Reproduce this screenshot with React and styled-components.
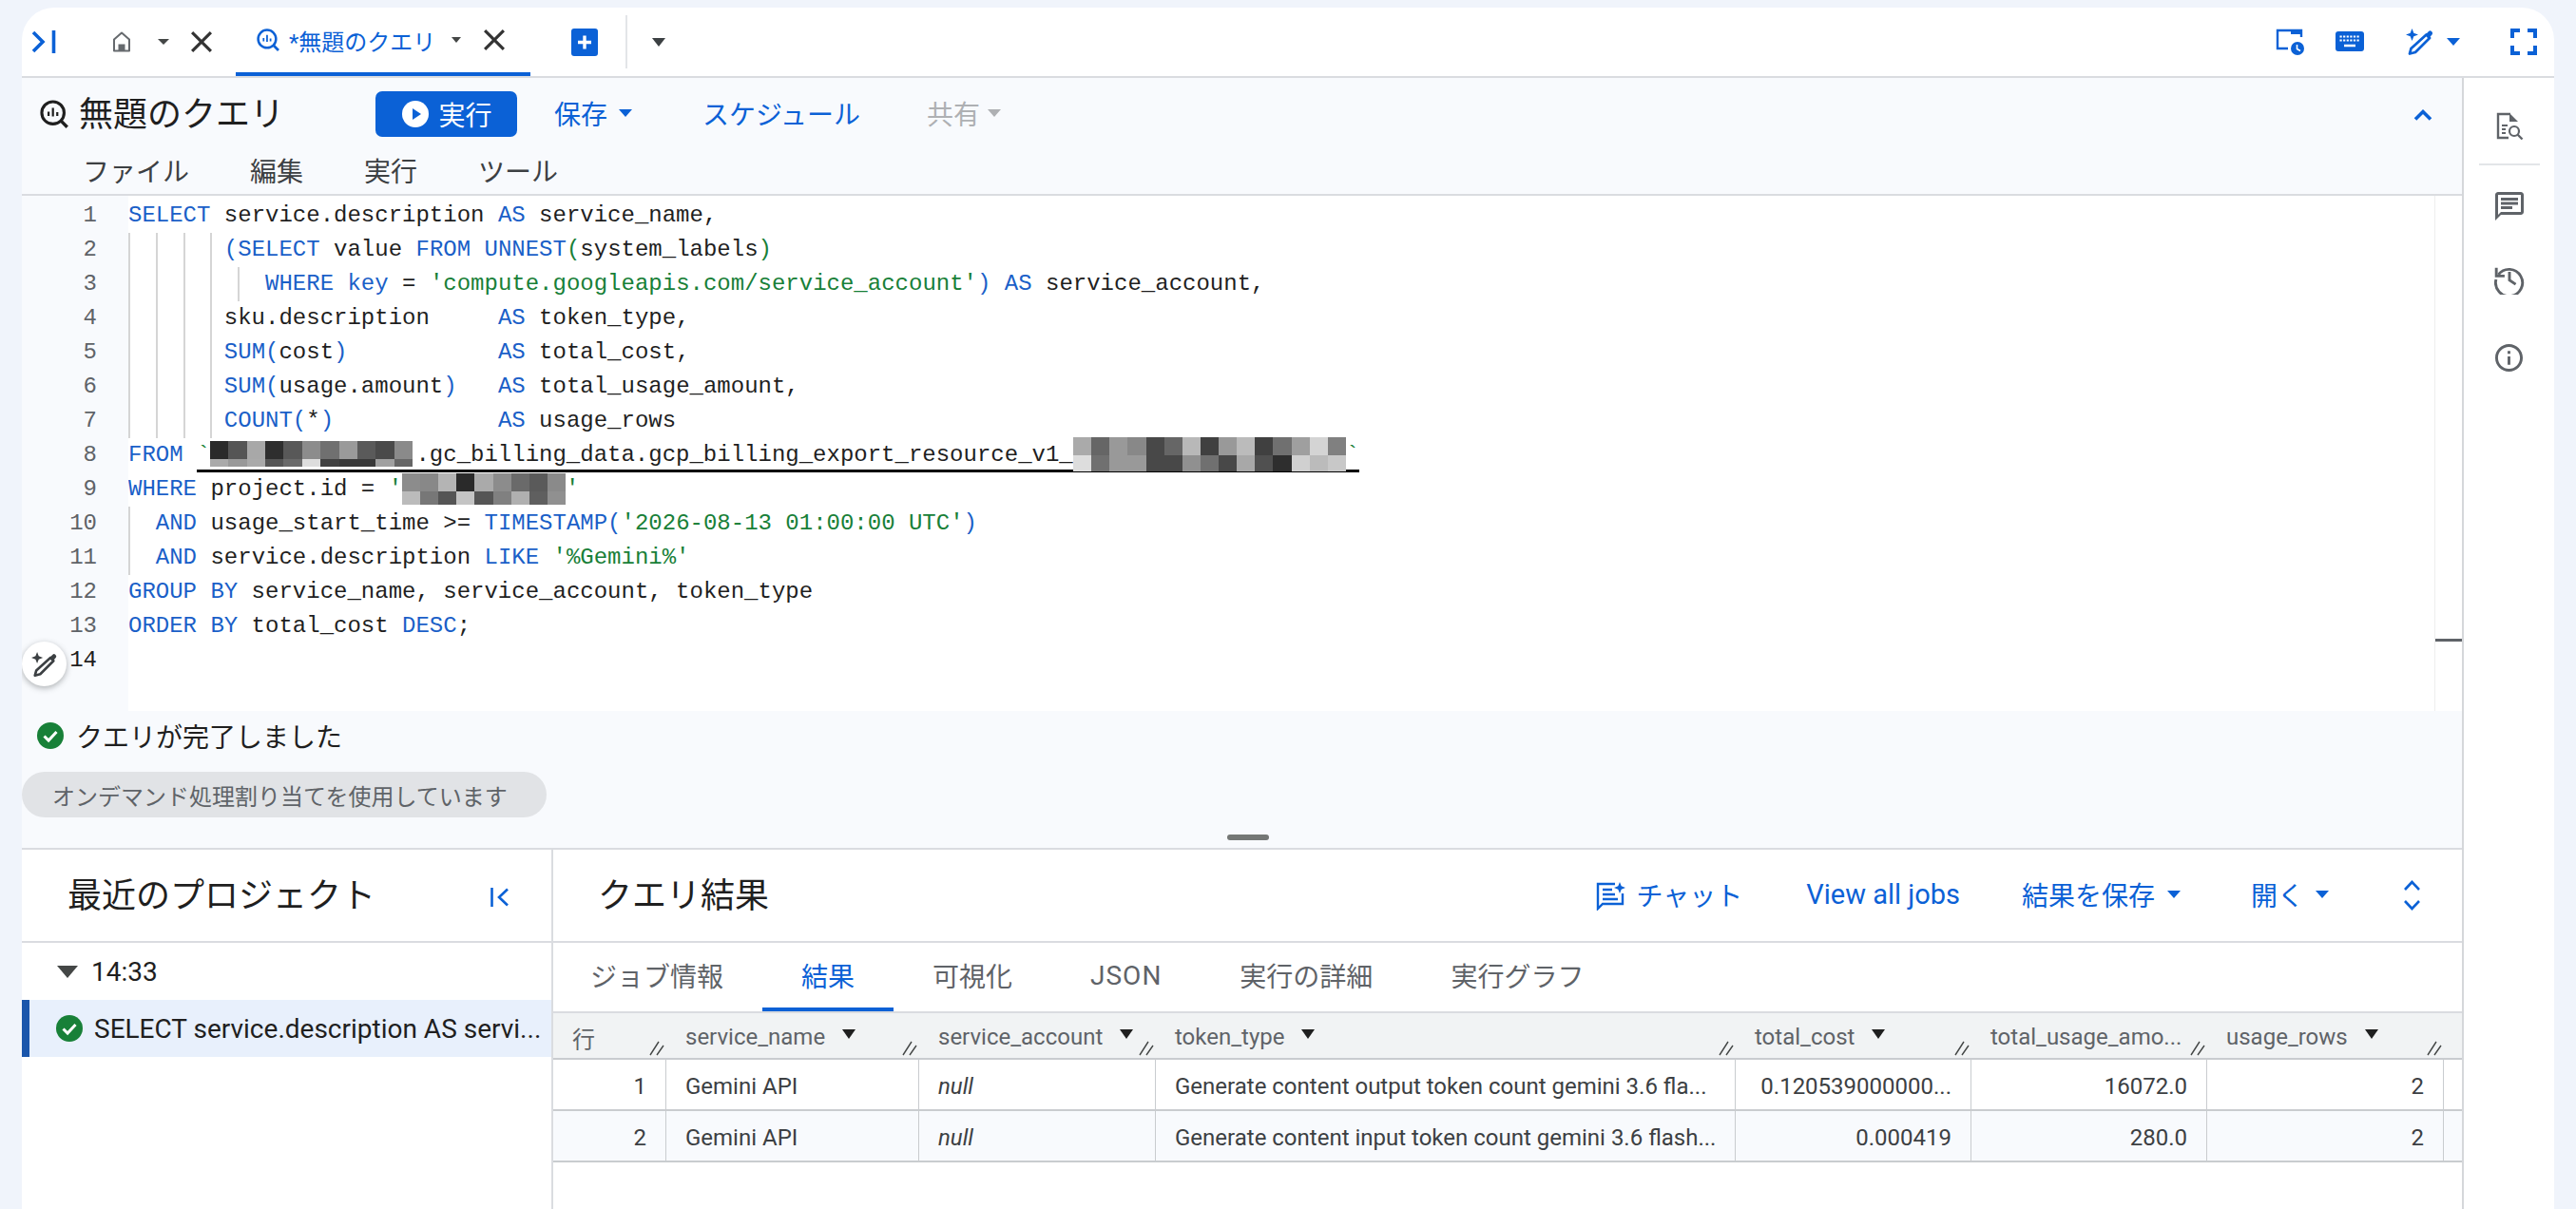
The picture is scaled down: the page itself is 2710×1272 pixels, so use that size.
import React from 'react'
import styled, { createGlobalStyle } from 'styled-components'

const BLUE = '#0b61d6'
const INK = '#1f1f1f'
const GREY = '#5f6368'
const LINE = '#dadce0'
const SOFT = '#f8fafd'

const GlobalStyle = createGlobalStyle`
  html, body {
    margin: 0;
    background: #f0f4fb;
    font-family: Roboto, "Noto Sans CJK JP", sans-serif;
    color: ${INK};
  }
`

const Page = styled.div`
  height: 1272px;
  box-sizing: border-box;
  padding: 8px 23px 0;
  overflow: hidden;
`

const Card = styled.div`
  height: 1264px;
  display: flex;
  flex-direction: column;
  background: #fff;
  border-radius: 34px 34px 0 0;
  overflow: hidden;
`

const TabBar = styled.div`
  height: 72px;
  flex: none;
  display: flex;
  align-items: center;
  border-bottom: 2px solid ${LINE};
  padding-right: 18px;
`

const Icon = styled.svg`
  display: block;
  flex: none;
  margin-left: ${p => p.$ml || 0}px;
  margin-top: ${p => p.$mt || 0}px;
  color: ${p => p.$color || 'currentColor'};
`

const Caret = styled.span`
  flex: none;
  display: inline-block;
  margin-left: ${p => p.$ml || 0}px;
  margin-bottom: ${p => p.$mb || 0}px;
  border-left: ${p => p.$w / 2}px solid transparent;
  border-right: ${p => p.$w / 2}px solid transparent;
  border-top: ${p => p.$h}px solid ${p => p.$color || '#444746'};
`

const QueryTab = styled.div`
  width: 310px;
  height: 72px;
  margin-left: 25px;
  box-sizing: border-box;
  padding-left: 22px;
  display: flex;
  align-items: center;
  border-bottom: 4px solid ${BLUE};
  color: ${BLUE};
`

const QueryTabLabel = styled.span`
  margin-left: 10px;
  font-size: 24px;
  white-space: nowrap;
`

const TabDivider = styled.span`
  width: 2px;
  height: 56px;
  margin-left: 29px;
  background: #e3e5e8;
`

const Spacer = styled.span`
  flex: 1;
`

const Workspace = styled.div`
  flex: 1;
  min-height: 0;
  display: flex;
`

const Main = styled.div`
  width: 2567px;
  flex: none;
  display: flex;
  flex-direction: column;
`

const Toolbar = styled.div`
  height: 122px;
  flex: none;
  background: ${SOFT};
  border-bottom: 2px solid ${LINE};
`

const TitleRow = styled.div`
  height: 76px;
  display: flex;
  align-items: center;
  padding: 0 31px 0 19px;
`

const QueryTitle = styled.h1`
  margin: 0 0 6px 11px;
  width: 312px;
  font-size: 36px;
  font-weight: 400;
  white-space: nowrap;
`

const RunButton = styled.button`
  width: 149px;
  height: 48px;
  border: 0;
  border-radius: 7px;
  background: ${BLUE};
  color: #fff;
  font: inherit;
  font-size: 28px;
  font-weight: 400;
  display: flex;
  align-items: center;
  justify-content: center;
  gap: 10px;
  padding: 0 0 0 2px;
`

const ToolAction = styled.span`
  display: flex;
  align-items: center;
  margin-left: ${p => p.$ml}px;
  padding-bottom: 3px;
  font-size: ${p => p.$size || 28}px;
  font-weight: 400;
  color: ${p => (p.$muted ? '#aeb0b3' : BLUE)};
  white-space: nowrap;
`

const MenuRow = styled.div`
  display: flex;
  gap: 64px;
  padding-left: 64px;
  height: 42px;
  align-items: center;
`

const MenuItem = styled.span`
  font-size: 28px;
  color: #3c4043;
`

const Editor = styled.div`
  height: 542px;
  flex: none;
  position: relative;
  display: flex;
  background: #fff;
`

const Gutter = styled.div`
  width: 112px;
  flex: none;
  box-sizing: border-box;
  padding: 3px 33px 0 0;
  background: ${SOFT};
  text-align: right;
  font: 24px/36px "Liberation Mono", monospace;
  color: ${GREY};
`

const LineNo = styled.div`
  height: 36px;
  color: ${p => (p.$active ? INK : GREY)};
`

const CodeArea = styled.div`
  flex: 1;
  padding-top: 3px;
  font: 24px/36px "Liberation Mono", monospace;
  color: ${INK};
  white-space: pre;
  overflow: hidden;
`

const CodeLine = styled.div`
  height: 36px;
  position: relative;
`

const Guide = styled.span`
  position: absolute;
  top: 0;
  bottom: 0;
  left: ${p => p.$col * 14.4}px;
  width: 2px;
  background: #d5d5d5;
`

const Kw = styled.span`
  color: #1a5fc8;
`

const Str = styled.span`
  color: #188038;
`

const Squiggle = styled.span`
  display: inline-block;
  height: 36px;
  box-sizing: border-box;
  vertical-align: top;
  border-bottom: 3px solid #000;
`

const AfterMosaic = styled.span`
  margin-left: 3px;
`

const MosaicBox = styled.svg`
  display: inline-block;
  vertical-align: top;
  margin-top: ${p => p.$top}px;
`

const Ruler = styled.div`
  width: 28px;
  flex: none;
  position: relative;
  border-left: 1px solid #eeeeee;
`

const RulerMark = styled.span`
  position: absolute;
  left: 0;
  right: 0;
  top: 466px;
  height: 3px;
  background: #5f6368;
`

const AssistBubble = styled.div`
  position: absolute;
  left: 0;
  top: 469px;
  width: 47px;
  height: 47px;
  border-radius: 50%;
  background: #fff;
  box-shadow: 0 2px 6px rgba(60, 64, 67, 0.4);
  display: flex;
  align-items: center;
  justify-content: center;
`

const StatusPanel = styled.div`
  height: 144px;
  flex: none;
  position: relative;
  background: ${SOFT};
`

const StatusRow = styled.div`
  height: 54px;
  box-sizing: border-box;
  padding: 0 0 2px 16px;
  display: flex;
  align-items: center;
  gap: 13px;
  font-size: 28px;
`

const Chip = styled.div`
  width: 552px;
  height: 48px;
  margin-top: 10px;
  box-sizing: border-box;
  padding-left: 32px;
  display: flex;
  align-items: center;
  border-radius: 24px;
  background: #e1e3e6;
  color: ${GREY};
  font-size: 24px;
  white-space: nowrap;
`

const DragHandle = styled.span`
  position: absolute;
  left: 1268px;
  bottom: 8px;
  width: 44px;
  height: 6px;
  border-radius: 3px;
  background: #747775;
`

const Results = styled.div`
  flex: 1;
  min-height: 0;
  display: flex;
  border-top: 2px solid ${LINE};
`

const HistoryPanel = styled.div`
  width: 557px;
  flex: none;
  border-right: 2px solid ${LINE};
`

const PanelHeader = styled.div`
  height: 96px;
  display: flex;
  align-items: center;
  border-bottom: 2px solid ${LINE};
  padding-left: ${p => p.$pad}px;
  padding-right: ${p => p.$padRight || 0}px;
`

const PanelTitle = styled.h2`
  margin: 0 0 6px;
  font-size: 36px;
  font-weight: 400;
  white-space: nowrap;
`

const TimeRow = styled.div`
  height: 60px;
  display: flex;
  align-items: center;
  padding-left: 37px;
  gap: 14px;
  font-size: 28px;
`

const JobRow = styled.div`
  height: 60px;
  box-sizing: border-box;
  display: flex;
  align-items: center;
  gap: 12px;
  padding-left: 28px;
  border-left: 8px solid #1a56ab;
  background: #e8f0fc;
  font-size: 28px;
  white-space: nowrap;
`

const ResultPanel = styled.div`
  flex: 1;
  min-width: 0;
`

const PanelActions = styled.div`
  margin-left: auto;
  display: flex;
  align-items: center;
`

const TabStrip = styled.div`
  height: 72px;
  display: flex;
  border-bottom: 2px solid ${LINE};
`

const ResultTab = styled.div`
  height: 72px;
  box-sizing: border-box;
  padding: 0 41px 0 ${p => (p.$first ? 39 : 41)}px;
  display: flex;
  align-items: center;
  font-size: 28px;
  letter-spacing: ${p => p.$spacing || 0}px;
  white-space: nowrap;
  color: ${p => (p.$active ? BLUE : GREY)};
  border-bottom: 4px solid ${p => (p.$active ? BLUE : 'transparent')};
`

const GridRow = styled.div`
  display: grid;
  grid-template-columns: 119px 266px 249px 610px 248px 248px 249px 1fr;
  height: ${p => p.$h}px;
  box-sizing: border-box;
  border-bottom: 2px solid #c9cccf;
  background: ${p => p.$bg || '#fff'};
`

const HeadCell = styled.div`
  position: relative;
  display: flex;
  align-items: center;
  gap: 18px;
  padding: 3px 0 0 20px;
  font-size: 24px;
  color: ${GREY};
  white-space: nowrap;
`

const Grip = styled.svg`
  position: absolute;
  right: 1px;
  bottom: 2px;
`

const DataCell = styled.div`
  display: flex;
  align-items: center;
  justify-content: ${p => (p.$right ? 'flex-end' : 'flex-start')};
  padding: 3px 20px 0;
  font-size: 24px;
  color: #3c4043;
  font-style: ${p => (p.$italic ? 'italic' : 'normal')};
  white-space: nowrap;
  overflow: hidden;
  border-right: 1px solid #c9cccf;
`

const Sidebar = styled.div`
  flex: 1;
  display: flex;
  flex-direction: column;
  align-items: center;
  border-left: 2px solid #d5d7da;
  color: ${GREY};
  padding-top: 36px;
`

const SideDivider = styled.span`
  width: 64px;
  height: 2px;
  margin: 24px 0 28px;
  background: #e3e5e8;
`

const QueryIcon = ({ size, color, ml }) => (
  <Icon width={size} height={size} viewBox="0 0 23 23" $color={color} $ml={ml}>
    <circle cx="10.5" cy="10.5" r="9" fill="none" stroke="currentColor" strokeWidth="2.4" />
    <path d="M16.8 16.8l5.2 5.2" stroke="currentColor" strokeWidth="2.6" fill="none" />
    <path d="M7 9.5v3.5M10.5 6.5v7M14 10v3" stroke="currentColor" strokeWidth="1.7" fill="none" />
  </Icon>
)

const CloseIcon = ({ ml }) => (
  <Icon width="22" height="22" viewBox="5 5 14 14" $ml={ml} $color="#333">
    <path fill="currentColor" d="M19 6.41L17.59 5 12 10.59 6.41 5 5 6.41 10.59 12 5 17.59 6.41 19 12 13.41 17.59 19 19 17.59 13.41 12z" />
  </Icon>
)

const PenSpark = ({ size, color, ml }) => (
  <Icon width={size} height={size} viewBox="0 0 30 28" $color={color} $ml={ml}>
    <path fill="currentColor" d="M6.5 0l1.8 4.7L13 6.5 8.3 8.3 6.5 13 4.7 8.3 0 6.5l4.7-1.8z" />
    <path fill="none" stroke="currentColor" strokeWidth="2.8" strokeLinejoin="round" d="M21.5 6.5l3.5 3.5L10 25l-6 1.5L5.5 21z" />
    <path fill="currentColor" d="M20.5 6.5L24 3a2.2 2.2 0 0 1 3 0l.5.5a2.2 2.2 0 0 1 0 3L24 10.5z" />
  </Icon>
)

const CheckCircle = () => (
  <Icon width="28" height="28" viewBox="0 0 28 28">
    <circle cx="14" cy="14" r="14" fill="#188038" />
    <path d="M7.5 14.5l4.6 4.6 8.4-9" fill="none" stroke="#fff" strokeWidth="3" />
  </Icon>
)

const Mosaic = ({ top, width, rowOne, rowTwo, rows }) => {
  const cellW = width / rows[0].length
  return (
    <MosaicBox width={width} height={rowOne + rowTwo} $top={top} shapeRendering="crispEdges">
      {rows.map((row, r) =>
        row.map((c, i) => (
          <rect
            key={`${r}-${i}`}
            x={i * cellW}
            y={r === 0 ? 0 : rowOne}
            width={cellW + 0.5}
            height={r === 0 ? rowOne : rowTwo}
            fill={c}
          />
        ))
      )}
    </MosaicBox>
  )
}

const mosaicA = [
  ['#2a2a2a', '#555', '#a8a8a8', '#2e2e2e', '#585858', '#8c8c8c', '#707070', '#9a9a9a', '#5a5a5a', '#4a4a4a', '#8a8a8a'],
  ['#aaa', '#999', '#aaa', '#555', '#6a6a6a', '#ddd', '#404040', '#383838', '#383838', '#a0a0a0', '#666'],
]
const mosaicB = [
  ['#aaa', '#666', '#999', '#888', '#484848', '#666', '#b8b8b8', '#404040', '#999', '#bbb', '#404040', '#707070', '#9f9f9f', '#d4d4d4', '#808080'],
  ['#ddd', '#707070', '#999', '#999', '#484848', '#484848', '#909090', '#707070', '#484848', '#a8a8a8', '#505050', '#2e2e2e', '#d0d0d0', '#bbb', '#c8c8c8'],
]
const mosaicC = [
  ['#8c8c8c', '#888', '#b4b4b4', '#2a2a2a', '#aaa', '#8c8c8c', '#6a6a6a', '#5a5a5a', '#8a8a8a'],
  ['#bbb', '#777', '#555', '#c4c4c4', '#555', '#808080', '#b0b0b0', '#5f5f5f', '#909090'],
]

const guidesBlock = [0, 2, 4, 6]

const codeLines = [
  { guides: [], body: <><Kw>SELECT</Kw> service.description <Kw>AS</Kw> service_name,</> },
  { guides: guidesBlock, body: <>       <Kw>(SELECT</Kw> value <Kw>FROM</Kw> <Kw>UNNEST</Kw><Str>(</Str>system_labels<Str>)</Str></> },
  { guides: [...guidesBlock, 8], body: <>          <Kw>WHERE</Kw> <Kw>key</Kw> = <Str>'compute.googleapis.com/service_account'</Str><Kw>)</Kw> <Kw>AS</Kw> service_account,</> },
  { guides: guidesBlock, body: <>       sku.description     <Kw>AS</Kw> token_type,</> },
  { guides: guidesBlock, body: <>       <Kw>SUM(</Kw>cost<Kw>)</Kw>           <Kw>AS</Kw> total_cost,</> },
  { guides: guidesBlock, body: <>       <Kw>SUM(</Kw>usage.amount<Kw>)</Kw>   <Kw>AS</Kw> total_usage_amount,</> },
  { guides: guidesBlock, body: <>       <Kw>COUNT(</Kw>*<Kw>)</Kw>            <Kw>AS</Kw> usage_rows</> },
  {
    guides: [],
    body: (
      <>
        <Kw>FROM</Kw>{' '}
        <Squiggle>
          <Str>`</Str>
          <Mosaic width={213} rowOne={19} rowTwo={8} top={3} rows={mosaicA} />
          <AfterMosaic>.gc_billing_data.gcp_billing_export_resource_v1_</AfterMosaic>
          <Mosaic width={287} rowOne={19} rowTwo={17} top={-1} rows={mosaicB} />
          <Str>`</Str>
        </Squiggle>
      </>
    ),
  },
  {
    guides: [],
    body: (
      <>
        <Kw>WHERE</Kw> project.id = <Str>'</Str>
        <Mosaic width={172} rowOne={19} rowTwo={14} top={1} rows={mosaicC} />
        <Str>'</Str>
      </>
    ),
  },
  { guides: [0], body: <>  <Kw>AND</Kw> usage_start_time &gt;= <Kw>TIMESTAMP</Kw><Kw>(</Kw><Str>'2026-08-13 01:00:00 UTC'</Str><Kw>)</Kw></> },
  { guides: [0], body: <>  <Kw>AND</Kw> service.description <Kw>LIKE</Kw> <Str>'%Gemini%'</Str></> },
  { guides: [], body: <><Kw>GROUP BY</Kw> service_name, service_account, token_type</> },
  { guides: [], body: <><Kw>ORDER BY</Kw> total_cost <Kw>DESC</Kw>;</> },
  { guides: [], body: '' },
]

const tableHead = [
  { label: '行' },
  { label: 'service_name', sort: true },
  { label: 'service_account', sort: true },
  { label: 'token_type', sort: true },
  { label: 'total_cost', sort: true },
  { label: 'total_usage_amo...' },
  { label: 'usage_rows', sort: true },
]

const tableRows = [
  ['1', 'Gemini API', 'null', 'Generate content output token count gemini 3.6 fla...', '0.120539000000...', '16072.0', '2'],
  ['2', 'Gemini API', 'null', 'Generate content input token count gemini 3.6 flash...', '0.000419', '280.0', '2'],
]

export default function App() {
  return (
    <Page>
      <GlobalStyle />
      <Card>
        <TabBar>
          <Icon width="26" height="26" viewBox="0 0 26 26" $ml={10} $color={BLUE}>
            <path d="M2 3l10 10L2 23" fill="none" stroke="currentColor" strokeWidth="3.6" />
            <path d="M23.5 1v24" stroke="currentColor" strokeWidth="3.6" />
          </Icon>
          <Icon width="20" height="22" viewBox="0 0 20 22" $ml={59} $color="#666a6e">
            <path d="M2 20.5V8.5L10 1.5l8 7v12z" fill="none" stroke="currentColor" strokeWidth="2" strokeLinejoin="round" />
            <path d="M6.5 13.5h7V20h-7z" fill="currentColor" />
          </Icon>
          <Caret $w={12} $h={6} $ml={28} />
          <CloseIcon ml={23} />
          <QueryTab>
            <QueryIcon size={24} />
            <QueryTabLabel>*無題のクエリ</QueryTabLabel>
            <Caret $w={11} $h={6} $ml={17} $color="#444746" />
            <CloseIcon ml={24} />
          </QueryTab>
          <Icon width="28" height="29" viewBox="0 0 28 29" $ml={43}>
            <rect width="28" height="29" rx="3" fill={BLUE} />
            <path d="M14 7.5v14M7 14.5h14" stroke="#fff" strokeWidth="3.4" />
          </Icon>
          <TabDivider />
          <Caret $w={15} $h={9} $ml={26} $color="#3c4043" />
          <Spacer />
          <Icon width="30" height="28" viewBox="0 0 30 28" $color={BLUE}>
            <path d="M13 21H2V2h25v7" fill="none" stroke="currentColor" strokeWidth="2.4" />
            <path d="M16 2h11v4H16z" fill="currentColor" />
            <circle cx="23" cy="21" r="7" fill="currentColor" />
            <path d="M22.5 17v4.5l3.5 2" fill="none" stroke="#fff" strokeWidth="1.6" />
          </Icon>
          <Icon width="30" height="22" viewBox="0 0 30 22" $ml={33} $color={BLUE}>
            <rect width="30" height="21" rx="3" fill="currentColor" />
            <path d="M4.5 5.5h21M4.5 9.5h21" stroke="#fff" strokeWidth="2.2" strokeDasharray="2.2 1.4" fill="none" />
            <path d="M9 15h12" stroke="#fff" strokeWidth="2.4" />
          </Icon>
          <PenSpark size={30} color={BLUE} ml={44} />
          <Caret $w={15} $h={8} $ml={13} $color={BLUE} />
          <Icon width="28" height="28" viewBox="5 5 14 14" $ml={53} $color={BLUE}>
            <path fill="currentColor" d="M7 14H5v5h5v-2H7v-3zm-2-4h2V7h3V5H5v5zm12 7h-3v2h5v-5h-2v3zM14 5v2h3v3h2V5h-5z" />
          </Icon>
        </TabBar>

        <Workspace>
          <Main>
            <Toolbar>
              <TitleRow>
                <QueryIcon size={30} color={INK} />
                <QueryTitle>無題のクエリ</QueryTitle>
                <RunButton>
                  <Icon width="28" height="28" viewBox="0 0 28 28">
                    <circle cx="14" cy="14" r="14" fill="#fff" />
                    <path d="M11 8l9 6-9 6z" fill={BLUE} />
                  </Icon>
                  実行
                </RunButton>
                <ToolAction $ml={39}>
                  保存
                  <Caret $w={14} $h={8} $ml={12} $color={BLUE} />
                </ToolAction>
                <ToolAction $ml={74}>スケジュール</ToolAction>
                <ToolAction $ml={70} $muted>
                  共有
                  <Caret $w={14} $h={8} $ml={8} $color="#aeb0b3" />
                </ToolAction>
                <Spacer />
                <Icon width="20" height="13" viewBox="0 0 20 13" $color={BLUE}>
                  <path d="M2 11.5l8-8 8 8" fill="none" stroke="currentColor" strokeWidth="3.6" />
                </Icon>
              </TitleRow>
              <MenuRow>
                <MenuItem>ファイル</MenuItem>
                <MenuItem>編集</MenuItem>
                <MenuItem>実行</MenuItem>
                <MenuItem>ツール</MenuItem>
              </MenuRow>
            </Toolbar>

            <Editor>
              <Gutter>
                {codeLines.map((_, i) => (
                  <LineNo key={i} $active={i === 13}>{i + 1}</LineNo>
                ))}
              </Gutter>
              <CodeArea>
                {codeLines.map((line, i) => (
                  <CodeLine key={i}>
                    {line.guides.map(g => <Guide key={g} $col={g} />)}
                    {line.body}
                  </CodeLine>
                ))}
              </CodeArea>
              <Ruler>
                <RulerMark />
              </Ruler>
              <AssistBubble>
                <PenSpark size={28} color="#3c4043" />
              </AssistBubble>
            </Editor>

            <StatusPanel>
              <StatusRow>
                <CheckCircle />
                クエリが完了しました
              </StatusRow>
              <Chip>オンデマンド処理割り当てを使用しています</Chip>
              <DragHandle />
            </StatusPanel>

            <Results>
              <HistoryPanel>
                <PanelHeader $pad={48}>
                  <PanelTitle>最近のプロジェクト</PanelTitle>
                  <Icon width="20" height="20" viewBox="0 0 20 20" $ml={121} $mt={4} $color={BLUE}>
                    <path d="M1.5 0v20" stroke="currentColor" strokeWidth="2.6" />
                    <path d="M18 1.5L9 10l9 8.5" fill="none" stroke="currentColor" strokeWidth="2.6" />
                  </Icon>
                </PanelHeader>
                <TimeRow>
                  <Caret $w={22} $h={13} $color="#444746" />
                  14:33
                </TimeRow>
                <JobRow>
                  <CheckCircle />
                  SELECT service.description AS servi...
                </JobRow>
              </HistoryPanel>

              <ResultPanel>
                <PanelHeader $pad={47} $padRight={43}>
                  <PanelTitle>クエリ結果</PanelTitle>
                  <PanelActions>
                    <Icon width="31" height="31" viewBox="0 0 31 31" $color={BLUE}>
                      <path d="M20 3H2v26l5-5h21V13" fill="none" stroke="currentColor" strokeWidth="2.4" />
                      <path d="M7 9h10M7 14h13M7 19h16" stroke="currentColor" strokeWidth="2.4" />
                      <path fill="currentColor" d="M25 1l1.7 4.3L31 7l-4.3 1.7L25 13l-1.7-4.3L19 7l4.3-1.7z" />
                    </Icon>
                    <ToolAction $ml={12}>チャット</ToolAction>
                    <ToolAction $ml={67} $size={29}>View all jobs</ToolAction>
                    <ToolAction $ml={65}>
                      結果を保存
                      <Caret $w={15} $h={8} $ml={13} $color={BLUE} />
                    </ToolAction>
                    <ToolAction $ml={74}>
                      開く
                      <Caret $w={15} $h={8} $ml={12} $color={BLUE} />
                    </ToolAction>
                    <Icon width="19" height="32" viewBox="0 0 19 32" $ml={78} $color={BLUE}>
                      <path d="M2 10l7.5-8L17 10M2 22l7.5 8 7.5-8" fill="none" stroke="currentColor" strokeWidth="2.6" />
                    </Icon>
                  </PanelActions>
                </PanelHeader>
                <TabStrip>
                  <ResultTab $first>ジョブ情報</ResultTab>
                  <ResultTab $active>結果</ResultTab>
                  <ResultTab>可視化</ResultTab>
                  <ResultTab $spacing={1}>JSON</ResultTab>
                  <ResultTab>実行の詳細</ResultTab>
                  <ResultTab>実行グラフ</ResultTab>
                </TabStrip>
                <GridRow $h={49} $bg="#f1f3f4">
                  {tableHead.map(col => (
                    <HeadCell key={col.label}>
                      {col.label}
                      {col.sort && <Caret $w={14} $h={10} $mb={6} $color="#1f1f1f" />}
                      <Grip width="17" height="16" viewBox="0 0 17 16">
                        <path d="M1 15L10 1M8 15L15 5" stroke="#444746" strokeWidth="1.4" fill="none" />
                      </Grip>
                    </HeadCell>
                  ))}
                  <HeadCell />
                </GridRow>
                {tableRows.map((row, r) => (
                  <GridRow key={row[0]} $h={54} $bg={r === 1 ? SOFT : '#fff'}>
                    <DataCell $right>{row[0]}</DataCell>
                    <DataCell>{row[1]}</DataCell>
                    <DataCell $italic>{row[2]}</DataCell>
                    <DataCell>{row[3]}</DataCell>
                    <DataCell $right>{row[4]}</DataCell>
                    <DataCell $right>{row[5]}</DataCell>
                    <DataCell $right>{row[6]}</DataCell>
                    <span />
                  </GridRow>
                ))}
              </ResultPanel>
            </Results>
          </Main>

          <Sidebar>
            <Icon width="30" height="30" viewBox="0 0 30 30">
              <path d="M16 2H3v25h11" fill="none" stroke="currentColor" strokeWidth="2.4" />
              <path d="M15 1l9 9h-9z" fill="currentColor" />
              <path d="M7 14h6M7 18h4M7 22h4" stroke="currentColor" strokeWidth="2.2" />
              <circle cx="20" cy="20" r="5" fill="none" stroke="currentColor" strokeWidth="2.2" />
              <path d="M23.5 23.5l5 5" stroke="currentColor" strokeWidth="2.4" />
            </Icon>
            <SideDivider />
            <Icon width="30" height="30" viewBox="2 2 20 20">
              <path fill="currentColor" d="M20 2H4c-1.1 0-2 .9-2 2v18l4-4h14c1.1 0 2-.9 2-2V4c0-1.1-.9-2-2-2zm0 14H6l-2 2V4h16v12zM6 6h12v2H6zm0 3h12v2H6zm0 3h8v2H6z" />
            </Icon>
            <Icon width="32" height="32" viewBox="1 1 22 22" $mt={46}>
              <path d="M4 8.5A9.7 9.7 0 1 1 2.3 12" fill="none" stroke="currentColor" strokeWidth="2" />
              <path d="M2.5 3.5V9.5H8.5" fill="none" stroke="currentColor" strokeWidth="2" />
              <path d="M12 6.5V12.5L16.5 15.5" fill="none" stroke="currentColor" strokeWidth="2" />
            </Icon>
            <Icon width="29" height="29" viewBox="2 2 20 20" $mt={52}>
              <path fill="currentColor" d="M11 7h2v2h-2zm0 4h2v6h-2zm1-9C6.48 2 2 6.48 2 12s4.48 10 10 10 10-4.48 10-10S17.52 2 12 2zm0 18c-4.41 0-8-3.59-8-8s3.59-8 8-8 8 3.59 8 8-3.59 8-8 8z" />
            </Icon>
          </Sidebar>
        </Workspace>
      </Card>
    </Page>
  )
}
